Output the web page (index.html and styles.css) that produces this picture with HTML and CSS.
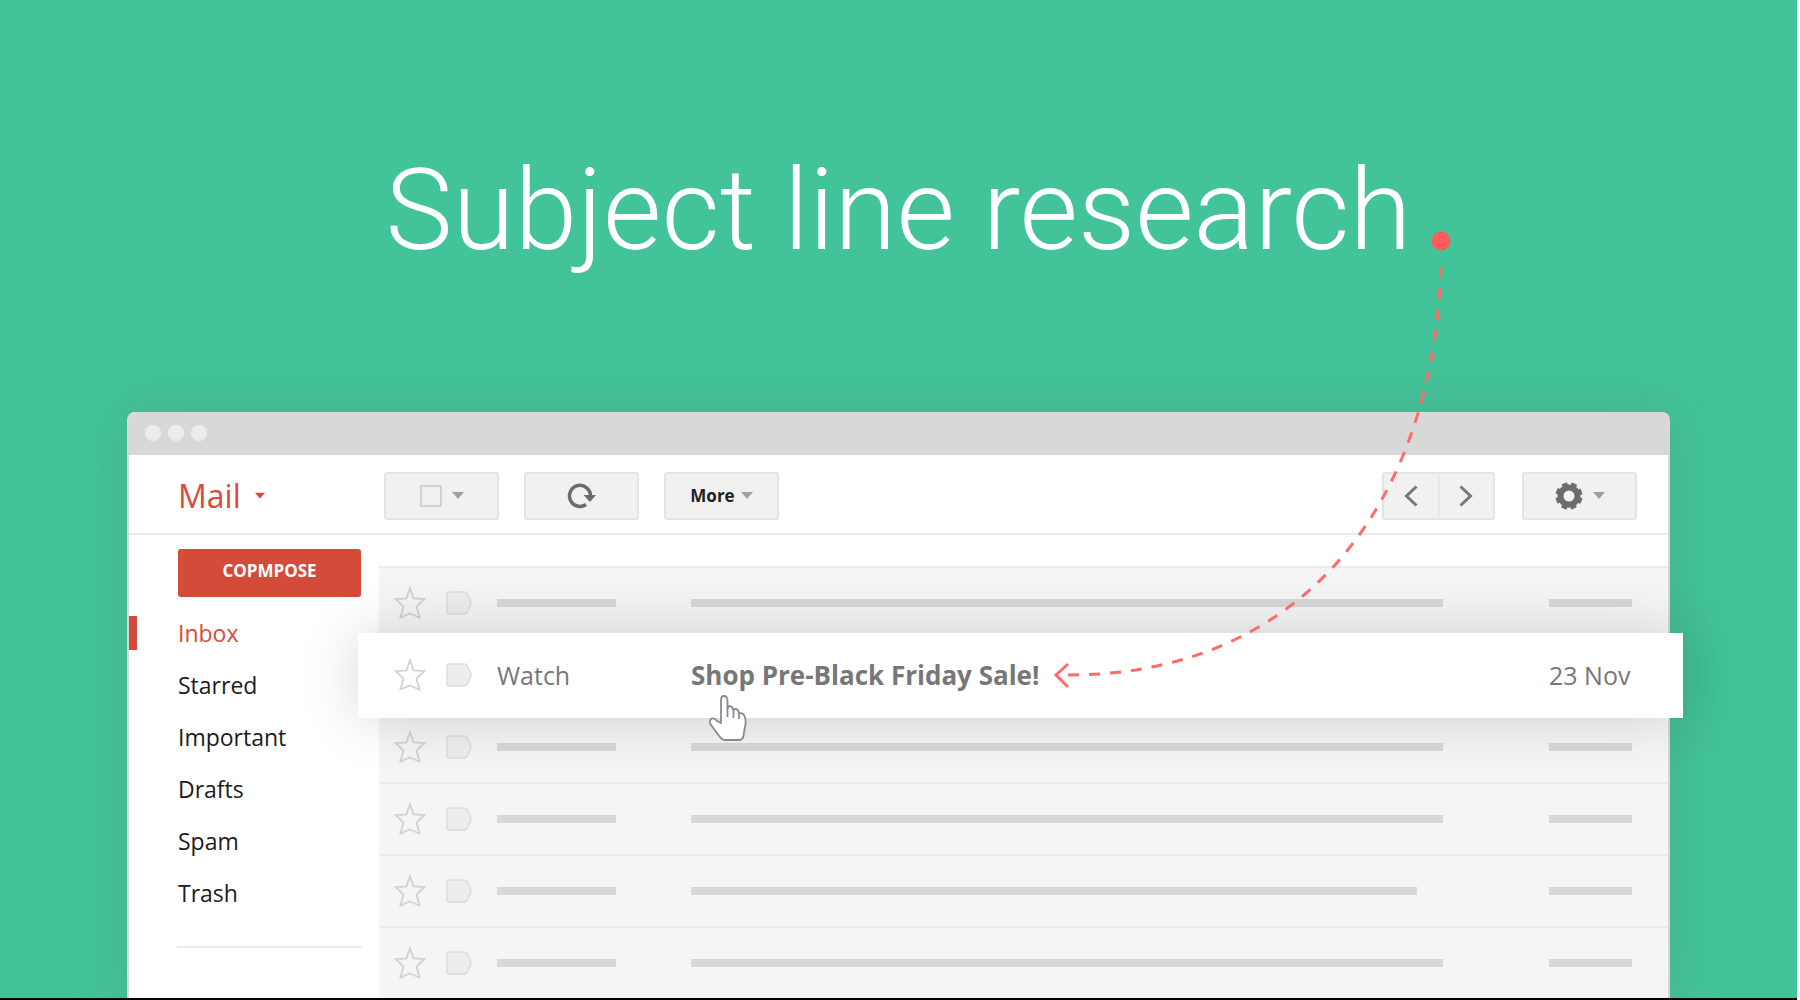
FILE: index.html
```html
<!DOCTYPE html>
<html lang="en">
<head>
<meta charset="utf-8">
<title>Subject line research</title>
<link rel="stylesheet" href="styles.css">
</head>
<body>
<svg class="defs" aria-hidden="true">
  <symbol id="star" viewBox="0 0 32 32"><path d="M16 1 19.500 11.500 30.500 12 22.500 19.500 25.500 30.500 16 26.500 6.500 30.500 9.500 19.500 1.500 12 12.500 11.500Z" fill="none" stroke="#d2d2d2" stroke-width="1.800"/></symbol>
  <symbol id="tag" viewBox="0 0 26 24"><path d="M3 1H18Q20 1 21 2.500L24.500 9.500Q25.500 12 24.500 14.500L21 21.500Q20 23 18 23H3Q1 23 1 21V3Q1 1 3 1Z" fill="#ededed" stroke="#dedede" stroke-width="1.500"/></symbol>
  <symbol id="caret" viewBox="0 0 12 8"><path d="M0 0H12L6 7Z" fill="currentColor"/></symbol>
</svg>
<main class="scene">
  <h1 class="headline">Subject line research</h1>
  <section class="window">
    <div class="titlebar"><i></i><i></i><i></i></div>
    <header class="toolbar">
      <button class="brand">Mail <svg class="caret"><use href="#caret"/></svg></button>
      <div class="tools">
        <button class="btn" aria-label="Select"><span class="box"></span><svg class="caret"><use href="#caret"/></svg></button>
        <button class="btn" aria-label="Refresh"><svg class="refresh" viewBox="0 0 30 28"><path d="M19 22.500A10.500 10.500 0 1 1 23.500 14" fill="none" stroke="#6c6c6c" stroke-width="3.500"/><path d="M16.500 13H29L23 20Z" fill="#6c6c6c"/></svg></button>
        <button class="btn more">More <svg class="caret"><use href="#caret"/></svg></button>
      </div>
      <div class="pager">
        <button class="page" aria-label="Newer"><svg viewBox="0 0 14 22"><path d="M12.500 1.500 2.500 11 12.500 20.500" fill="none" stroke="#777" stroke-width="3"/></svg></button>
        <button class="page" aria-label="Older"><svg viewBox="0 0 14 22"><path d="M1.500 1.500 11.500 11 1.500 20.500" fill="none" stroke="#777" stroke-width="3"/></svg></button>
      </div>
      <button class="btn" aria-label="Settings"><svg class="gear" viewBox="0 0 28 28"><circle cx="14" cy="14" r="8.500" fill="none" stroke="#6c6c6c" stroke-width="6"/><circle cx="14" cy="14" r="11.800" fill="none" stroke="#6c6c6c" stroke-width="3.600" stroke-dasharray="5.600 3.670" stroke-dashoffset="-1.800"/></svg><svg class="caret"><use href="#caret"/></svg></button>
    </header>
    <div class="content">
      <aside class="sidebar">
        <button class="compose">COPMPOSE</button>
        <nav class="folders">
          <a class="active" href="#inbox">Inbox</a>
          <a href="#starred">Starred</a>
          <a href="#important">Important</a>
          <a href="#drafts">Drafts</a>
          <a href="#spam">Spam</a>
          <a href="#trash">Trash</a>
        </nav>
        <hr class="rule">
      </aside>
      <div class="list">
        <div class="row"><svg class="star"><use href="#star"/></svg><svg class="tag"><use href="#tag"/></svg><span class="from"><b class="bar"></b></span><span class="subject"><b class="bar"></b></span><span class="date"><b class="bar"></b></span></div>
        <div class="row"><div class="lifted"><svg class="star"><use href="#star"/></svg><svg class="tag"><use href="#tag"/></svg><span class="from">Watch</span><strong class="subject">Shop Pre-Black Friday Sale!</strong><time class="date">23 Nov</time></div></div>
        <div class="row"><svg class="star"><use href="#star"/></svg><svg class="tag"><use href="#tag"/></svg><span class="from"><b class="bar"></b></span><span class="subject"><b class="bar"></b></span><span class="date"><b class="bar"></b></span></div>
        <div class="row"><svg class="star"><use href="#star"/></svg><svg class="tag"><use href="#tag"/></svg><span class="from"><b class="bar"></b></span><span class="subject"><b class="bar"></b></span><span class="date"><b class="bar"></b></span></div>
        <div class="row"><svg class="star"><use href="#star"/></svg><svg class="tag"><use href="#tag"/></svg><span class="from"><b class="bar"></b></span><span class="subject short"><b class="bar"></b></span><span class="date"><b class="bar"></b></span></div>
        <div class="row"><svg class="star"><use href="#star"/></svg><svg class="tag"><use href="#tag"/></svg><span class="from"><b class="bar"></b></span><span class="subject"><b class="bar"></b></span><span class="date"><b class="bar"></b></span></div>
      </div>
    </div>
  </section>
  <svg class="trail" viewBox="0 0 410 466" aria-hidden="true">
    <circle cx="391" cy="11" r="9.500" fill="#ff5c5c"/>
    <path d="M18 445C255 445 386 270 391 30" fill="none" stroke="#ff6b6b" stroke-width="3" stroke-dasharray="11 10"/>
    <path d="M18 434 6 445 18 457" fill="none" stroke="#ff6b6b" stroke-width="3"/>
  </svg>
  <svg class="hand" viewBox="0 0 38 46" aria-hidden="true"><path d="M12 28V5Q12 1 15 1Q18 1 18.500 5V13Q20 10 23 12L24.500 15Q27 12.500 29.500 16L30 18.500Q34 17 36 22Q37.500 28 35.500 34L34.500 41Q34 44 31 45H16Q13 45 11 42L2 30Q0 26 2 24Q5 22 8 26Z" fill="#fff" stroke="#868a94" stroke-width="1.800" stroke-linejoin="round"/><path d="M18.500 12V22M24.500 14V23M30 17V24" stroke="#868a94" stroke-width="1.800"/></svg>
</main>
</body>
</html>
```
FILE: styles.css
```css
* { box-sizing: border-box; }
body { margin: 0; font-family: "Open Sans", "Noto Sans", sans-serif; background: #fff; }
button { font: inherit; border: 0; background: none; padding: 0; margin: 0; color: inherit; }
.defs { position: absolute; width: 0; height: 0; }
.scene {
  position: relative;
  height: 100vh;
  margin-right: 3px;
  overflow: hidden;
  background: #43c39a;
  border-bottom: 2px solid #000;
}
.headline {
  margin: 0;
  height: 412px;
  padding-top: 139px;
  text-align: center;
  color: #fff;
  font: 300 113px/144px Roboto, sans-serif;
}
.window {
  margin: 0 127px;
  background: #fff;
  border: solid #d8d8d8;
  border-width: 0 2px;
  border-radius: 8px 8px 0 0;
  box-shadow: 0 0 60px rgba(80, 80, 80, .16);
}
.titlebar {
  display: flex;
  align-items: center;
  gap: 7px;
  height: 43px;
  padding: 0 0 2px 16px;
  background: #d8d8d8;
  border-radius: 6px 6px 0 0;
}
.titlebar i { width: 16px; height: 16px; border-radius: 50%; background: #ececec; }
.toolbar {
  display: flex;
  align-items: center;
  height: 80px;
  padding: 3px 31px 0 49px;
  border-bottom: 2px solid #ebebeb;
}
.brand {
  display: flex;
  align-items: center;
  gap: 14px;
  width: 206px;
  font-size: 32px;
  line-height: 48px;
  color: #d84b3a;
}
.caret { width: 12px; height: 8px; color: #a0a0a0; }
.brand .caret { width: 10px; color: #d84b3a; }
.tools { display: flex; gap: 25px; flex: 1; }
.btn, .pager {
  display: flex;
  align-items: center;
  justify-content: center;
  width: 115px;
  height: 48px;
  background: #f1f1f1;
  border: 2px solid #e4e4e4;
  border-radius: 3px;
}
.btn { gap: 10px; }
.box { width: 22px; height: 22px; border: 2px solid #d2d2d2; }
.refresh { width: 30px; height: 28px; }
.more { gap: 6px; font-size: 17px; font-weight: 700; color: #222; }
.pager { width: 113px; margin-right: 27px; }
.page { display: flex; flex: 1; height: 44px; align-items: center; justify-content: center; }
.page + .page { border-left: 2px solid #e8e8e8; }
.page svg { width: 14px; height: 22px; }
.gear { width: 28px; height: 28px; }
.content { display: flex; }
.sidebar { width: 250px; padding: 14px 17px 0 0; }
.compose {
  display: block;
  width: 183px;
  height: 48px;
  margin: 0 0 12px 49px;
  padding-bottom: 6px;
  background: #d54b3a;
  border-radius: 3px;
  color: #fff;
  font-size: 17px;
  font-weight: 700;
}
.folders { display: grid; gap: 18px; padding-top: 7px; }
.folders a {
  height: 34px;
  padding-left: 49px;
  line-height: 34px;
  font-size: 23px;
  color: #1c1c1c;
  text-decoration: none;
}
.folders .active { padding-left: 41px; border-left: 8px solid #d54b3a; color: #d84b3a; }
.rule { margin: 36px 0 0 48px; border: 0; border-top: 2px solid #ebebeb; }
.list { flex: 1; margin-top: 31px; }
.row {
  position: relative;
  display: flex;
  align-items: center;
  height: 72px;
  padding: 0 36px 0 15px;
  background: #f5f5f5;
  border-top: 2px solid #ebebeb;
}
.star { width: 32px; height: 32px; margin-right: 20px; }
.tag { width: 26px; height: 24px; margin-right: 25px; }
.from { width: 119px; margin-right: 75px; }
.subject { flex: 1; margin-right: 106px; }
.short { margin-right: 132px; }
.date { width: 83px; }
.bar { display: block; height: 8px; background: #d8d8d8; }
.lifted {
  position: absolute;
  z-index: 1;
  inset: -7px -15px -8px -21px;
  display: flex;
  align-items: center;
  padding: 0 51px 2px 36px;
  background: #fff;
  box-shadow: 0 0 60px rgba(0, 0, 0, .16);
  font-size: 25px;
  color: #777;
}
.lifted .subject { font-size: 26px; }
.lifted .date { white-space: nowrap; }
.trail { position: absolute; z-index: 2; top: 230px; right: 337px; width: 410px; height: 466px; }
.hand { position: absolute; z-index: 2; top: 695px; left: 709px; width: 38px; height: 46px; }
```
